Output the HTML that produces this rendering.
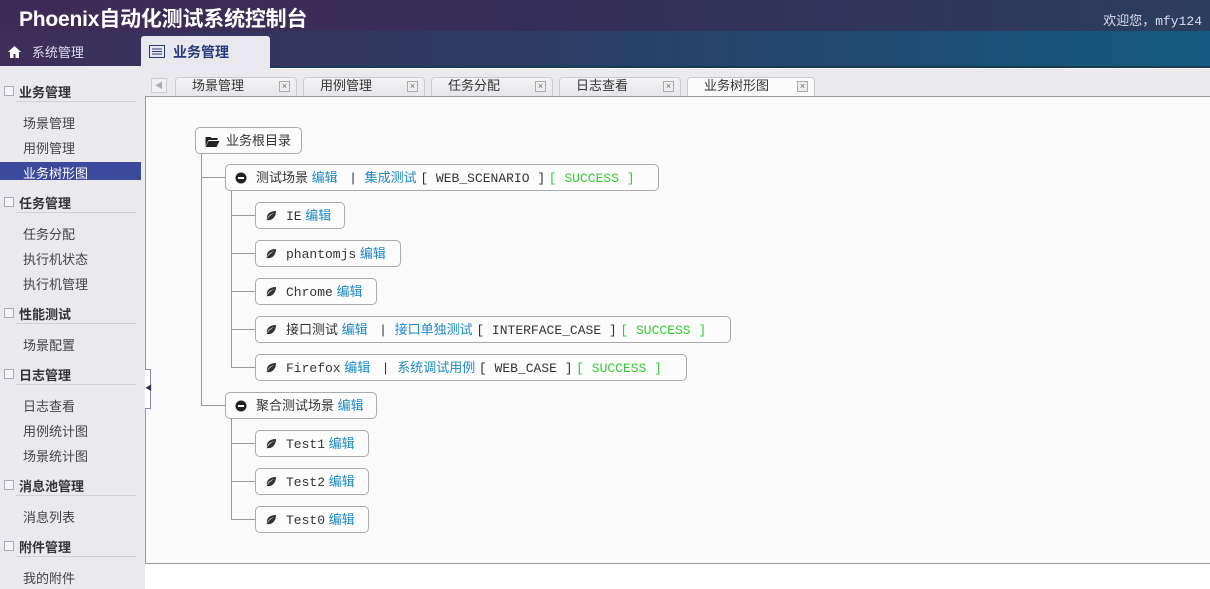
<!DOCTYPE html>
<html><head><meta charset="utf-8"><style>
*{margin:0;padding:0;box-sizing:border-box}
body{width:1210px;height:589px;overflow:hidden;background:#fff;font-family:"Liberation Sans","Noto Sans CJK SC",sans-serif;font-size:13px;color:#333;position:relative}
.top{position:absolute;left:0;top:0;width:1210px;height:31px;background:linear-gradient(90deg,#3f2b57,#352f5a 50%,#2b3e5e)}
.title{position:absolute;left:19px;top:3px;color:#fff;font-size:21px;font-weight:bold;letter-spacing:-0.2px}
.welcome{position:absolute;right:8px;top:10px;color:#dde;font-size:13px;font-family:"Liberation Mono","Noto Sans CJK SC",monospace}
.nav{position:absolute;left:0;top:31px;width:1210px;height:37px;background:linear-gradient(90deg,#3d2f5a,#2e3a62 40%,#1f4c74 75%,#155a80);border-bottom:2px solid #173a55}
.nav1{position:absolute;left:8px;top:11px;color:#dde;font-size:13px}
.ntab{position:absolute;left:141px;top:36px;width:129px;height:33px;background:#e8e8ee;border-radius:3px 3px 0 0;color:#2a3a7a;font-weight:bold;font-size:14px;padding:6px 0 0 32px}
.side{position:absolute;left:0;top:66px;width:145px;height:523px;background:#e9e9ee}
.sh{position:absolute;left:19px;font-weight:bold;color:#333;font-size:13px}
.sh:before{content:"";position:absolute;left:-15px;top:4px;width:8px;height:8px;border:1px solid #aab;background:#f4f4f8}
.sl{position:absolute;left:16px;width:120px;height:1px;background:#cfd0d8}
.si{position:absolute;left:23px;color:#444}
.sel{position:absolute;left:0;width:141px;height:18px;background:#3c4a9c}
.tabs{position:absolute;left:145px;top:69px;width:1065px;height:28px;background:#e9e9ee}
.tab{position:absolute;top:8px;height:20px;background:linear-gradient(#f4f4f6,#e4e4ea);border:1px solid #c9c9d2;border-bottom:none;border-radius:4px 4px 0 0;padding:0 0 0 16px;font-size:13px;color:#333;line-height:16px}
.tab i{position:absolute;right:6px;top:3px;width:11px;height:11px;border:1px solid #aaa;background:#eee;font-style:normal;font-size:9px;line-height:9px;text-align:center;color:#666}
.panel{position:absolute;left:145px;top:96px;width:1065px;height:468px;background:#fafafa;border:1px solid #999;border-right:none}
.n{position:absolute;height:27px;border:1px solid #aaa;border-radius:5px;background:#fcfcfc;padding:0 0 0 30px;line-height:25px;white-space:nowrap;color:#333}
.n .m{font-family:"Liberation Mono",monospace;font-size:13px}
.b{color:#1f8ac4}
.g{color:#3c3;font-family:"Liberation Mono",monospace;font-size:13px}
.ic{position:absolute;left:9px;top:7px;width:12px;height:12px}
.l{position:absolute;background:#999}
</style></head><body>
<div class="top"><div class="title">Phoenix自动化测试系统控制台</div><div class="welcome">欢迎您，mfy124</div></div>
<div class="nav"><div class="nav1"><svg width="13" height="12" viewBox="0 0 13 12" style="vertical-align:-1px"><path d="M6.5 0L0 6h2v6h3.5V8h2v4H11V6h2z" fill="#fff"/></svg>&nbsp;&nbsp;&nbsp;系统管理</div></div>
<div class="ntab"><svg width="16" height="13" viewBox="0 0 16 13" style="position:absolute;left:8px;top:9px"><rect x=".5" y=".5" width="15" height="12" fill="none" stroke="#2a3a7a"/><path d="M3 4h10M3 6.5h10M3 9h10" stroke="#2a3a7a"/></svg>业务管理</div>
<div class="side">
<div class="sh" style="top:16px">业务管理</div><div class="sl" style="top:35px"></div>
<div class="si" style="top:47px">场景管理</div><div class="si" style="top:72px">用例管理</div>
<div class="sel" style="top:96px"></div><div class="si" style="top:97px;color:#fff">业务树形图</div>
<div class="sh" style="top:127px">任务管理</div><div class="sl" style="top:146px"></div>
<div class="si" style="top:158px">任务分配</div><div class="si" style="top:183px">执行机状态</div><div class="si" style="top:208px">执行机管理</div>
<div class="sh" style="top:238px">性能测试</div><div class="sl" style="top:257px"></div>
<div class="si" style="top:269px">场景配置</div>
<div class="sh" style="top:299px">日志管理</div><div class="sl" style="top:318px"></div>
<div class="si" style="top:330px">日志查看</div><div class="si" style="top:355px">用例统计图</div><div class="si" style="top:380px">场景统计图</div>
<div class="sh" style="top:410px">消息池管理</div><div class="sl" style="top:429px"></div>
<div class="si" style="top:441px">消息列表</div>
<div class="sh" style="top:471px">附件管理</div><div class="sl" style="top:490px"></div>
<div class="si" style="top:502px">我的附件</div>
</div>
<div class="tabs">
<div style="position:absolute;left:6px;top:9px;width:16px;height:15px;border:1px solid #ccc;background:#f0f0f2;font-size:8px;color:#aaa;text-align:center;line-height:13px">◀</div>
<div class="tab" style="left:30px;width:122px">场景管理<i>×</i></div>
<div class="tab" style="left:158px;width:122px">用例管理<i>×</i></div>
<div class="tab" style="left:286px;width:122px">任务分配<i>×</i></div>
<div class="tab" style="left:414px;width:122px">日志查看<i>×</i></div>
<div class="tab" style="left:542px;width:128px;background:#fafafa;height:21px">业务树形图<i>×</i></div>
</div>
<div class="panel"></div>
<div style="position:absolute;left:145px;top:369px;width:6px;height:40px;background:#fff;border:1px solid #88a;border-left:none;font-size:7px;line-height:38px;color:#335">◀</div>
<div class="l" style="left:201px;top:153px;width:1px;height:252px"></div>
<div class="l" style="left:201px;top:177px;width:24px;height:1px"></div>
<div class="l" style="left:201px;top:405px;width:24px;height:1px"></div>
<div class="l" style="left:231px;top:191px;width:1px;height:177px"></div>
<div class="l" style="left:231px;top:419px;width:1px;height:101px"></div>
<div class="l" style="left:231px;top:215px;width:24px;height:1px"></div>
<div class="l" style="left:231px;top:253px;width:24px;height:1px"></div>
<div class="l" style="left:231px;top:291px;width:24px;height:1px"></div>
<div class="l" style="left:231px;top:329px;width:24px;height:1px"></div>
<div class="l" style="left:231px;top:367px;width:24px;height:1px"></div>
<div class="l" style="left:231px;top:443px;width:24px;height:1px"></div>
<div class="l" style="left:231px;top:481px;width:24px;height:1px"></div>
<div class="l" style="left:231px;top:519px;width:24px;height:1px"></div>
<svg width="0" height="0" style="position:absolute"><defs>
<symbol id="leaf" viewBox="0 0 12 12"><path d="M1 11C3 7 6 5 9 3 6 4 3 6 2 9 1 5 4 1 11 1 11 7 7 11 2 10z" fill="#333"/></symbol>
<symbol id="minus" viewBox="0 0 12 12"><circle cx="6" cy="6" r="5.5" fill="#222"/><rect x="3" y="5" width="6" height="2" fill="#fff"/></symbol>
<symbol id="fold" viewBox="0 0 14 12"><path d="M0 2h5l1 1h6v2H3L0 11z" fill="#222"/><path d="M3 6h11l-3 6H0z" fill="#222"/></symbol>
</defs></svg>
<div class="n" style="left:195px;top:127px;width:107px"><svg class="ic" style="width:15px"><use href="#fold"/></svg>业务根目录</div>
<div class="n" style="left:225px;top:164px;width:434px"><svg class="ic"><use href="#minus"/></svg>测试场景 <span class="b">编辑</span> <span class="m">&nbsp;| </span><span class="b">集成测试</span> <span class="m">[ WEB_SCENARIO ]</span> <span class="g">[ SUCCESS ]</span></div>
<div class="n" style="left:255px;top:202px;width:90px"><svg class="ic"><use href="#leaf"/></svg><span class="m">IE</span> <span class="b">编辑</span></div>
<div class="n" style="left:255px;top:240px;width:146px"><svg class="ic"><use href="#leaf"/></svg><span class="m">phantomjs</span> <span class="b">编辑</span></div>
<div class="n" style="left:255px;top:278px;width:122px"><svg class="ic"><use href="#leaf"/></svg><span class="m">Chrome</span> <span class="b">编辑</span></div>
<div class="n" style="left:255px;top:316px;width:476px"><svg class="ic"><use href="#leaf"/></svg>接口测试 <span class="b">编辑</span> <span class="m">&nbsp;| </span><span class="b">接口单独测试</span> <span class="m">[ INTERFACE_CASE ]</span> <span class="g">[ SUCCESS ]</span></div>
<div class="n" style="left:255px;top:354px;width:432px"><svg class="ic"><use href="#leaf"/></svg><span class="m">Firefox</span> <span class="b">编辑</span> <span class="m">&nbsp;| </span><span class="b">系统调试用例</span> <span class="m">[ WEB_CASE ]</span> <span class="g">[ SUCCESS ]</span></div>
<div class="n" style="left:225px;top:392px;width:152px"><svg class="ic"><use href="#minus"/></svg>聚合测试场景 <span class="b">编辑</span></div>
<div class="n" style="left:255px;top:430px;width:114px"><svg class="ic"><use href="#leaf"/></svg><span class="m">Test1</span> <span class="b">编辑</span></div>
<div class="n" style="left:255px;top:468px;width:114px"><svg class="ic"><use href="#leaf"/></svg><span class="m">Test2</span> <span class="b">编辑</span></div>
<div class="n" style="left:255px;top:506px;width:114px"><svg class="ic"><use href="#leaf"/></svg><span class="m">Test0</span> <span class="b">编辑</span></div>
</body></html>
